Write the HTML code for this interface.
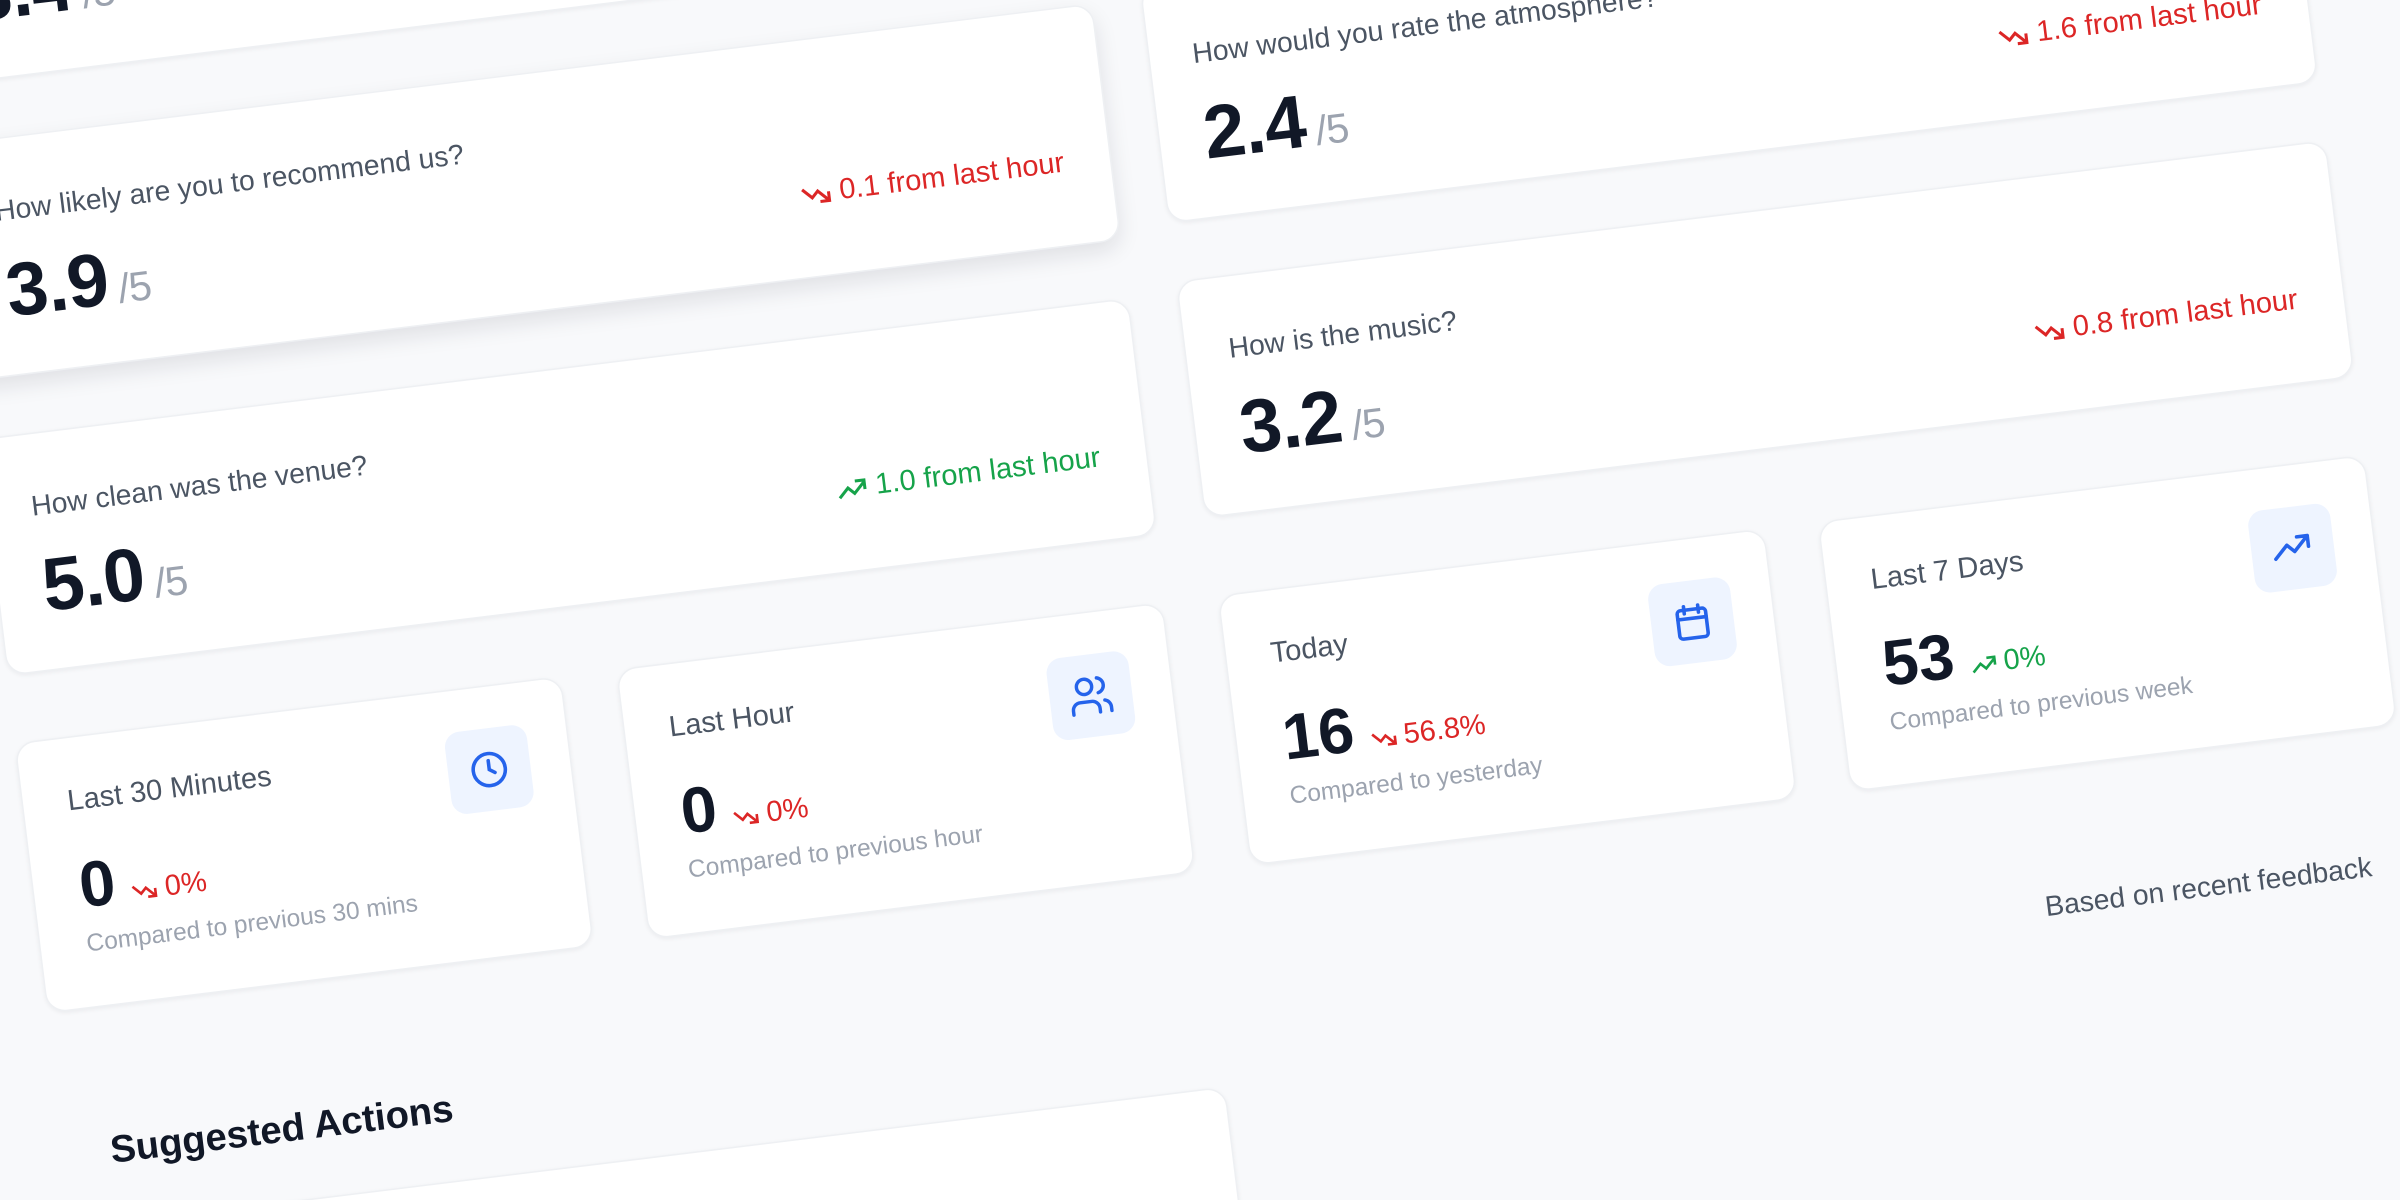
<!DOCTYPE html>
<html><head><meta charset="utf-8"><style>
html,body{margin:0;padding:0;width:2400px;height:1200px;overflow:hidden;background:#f8f9fb;font-family:"Liberation Sans",Arial,sans-serif}
#w{position:relative;width:2400px;height:1200px;overflow:hidden}
#s{position:absolute;left:0;top:0;width:1568px;height:784px;transform:scale(1.5306);transform-origin:0 0}
#r{position:absolute;left:0;top:0;width:1600px;height:900px;transform:rotate(-7deg);transform-origin:0 0}
.c{position:absolute;background:#fff;border:1px solid #eef0f3;border-radius:13px;box-shadow:0 1px 3px rgba(16,24,40,.06);box-sizing:border-box}
.q{width:757px;height:156px}
.lbl{position:absolute;left:28px;top:36px;font-size:18.5px;color:#4b5563}
.val{position:absolute;left:29px;top:72px;font-size:49px;font-weight:bold;color:#111827;letter-spacing:-0.5px}
.val span{font-size:27px;font-weight:normal;color:#9ca3af;margin-left:6px}
.tr{position:absolute;right:30px;top:90px;font-size:19px;display:flex;align-items:center;gap:5px}
.red{color:#dc2626}.grn{color:#16a34a}
.st{width:360px;height:178px;top:483px}
.sl{position:absolute;left:29px;top:31px;font-size:19px;color:#4b5563}
.ic{position:absolute;right:26px;top:27px;width:54px;height:54px;border-radius:10px;background:#eef4ff;display:flex;align-items:center;justify-content:center}
.sv{position:absolute;left:30px;top:73px;font-size:42px;font-weight:bold;color:#111827;display:flex;align-items:baseline;gap:10px}
.sv span{font-size:19px;font-weight:normal;display:inline-flex;align-items:center;gap:4px}
.sc{position:absolute;left:30px;top:127px;font-size:16px;color:#9ca3af}
</style></head><body><div id="w"><div id="s"><div id="r">
<div class="c q" style="left:-49px;top:-105px"><div class="val">3.4<span>/5</span></div></div>
<div class="c q" style="left:-49px;top:89px;box-shadow:0 6px 14px rgba(16,24,40,.10)"><div class="lbl">How likely are you to recommend us?</div><div class="val">3.9<span>/5</span></div><div class="tr red"><svg width="20" height="14" viewBox="0 0 20 14" fill="none" stroke="#dc2626" stroke-width="2"><path d="M1 3l6 6 4-4 7 7M12 12h6V6"/></svg>0.1 from last hour</div></div>
<div class="c q" style="left:-49px;top:283px"><div class="lbl">How clean was the venue?</div><div class="val">5.0<span>/5</span></div><div class="tr grn"><svg width="20" height="14" viewBox="0 0 20 14" fill="none" stroke="#16a34a" stroke-width="2"><path d="M1 12l6-6 4 4 7-7M12 2h6v6"/></svg>1.0 from last hour</div></div>
<div class="c q" style="left:740px;top:-112px"></div>
<div class="c q" style="left:740px;top:82px"><div class="lbl">How would you rate the atmosphere?</div><div class="val">2.4<span>/5</span></div><div class="tr red"><svg width="20" height="14" viewBox="0 0 20 14" fill="none" stroke="#dc2626" stroke-width="2"><path d="M1 3l6 6 4-4 7 7M12 12h6V6"/></svg>1.6 from last hour</div></div>
<div class="c q" style="left:740px;top:276px"><div class="lbl">How is the music?</div><div class="val">3.2<span>/5</span></div><div class="tr red"><svg width="20" height="14" viewBox="0 0 20 14" fill="none" stroke="#dc2626" stroke-width="2"><path d="M1 3l6 6 4-4 7 7M12 12h6V6"/></svg>0.8 from last hour</div></div>

<div class="c st" style="left:-50px"><div class="sl">Last 30 Minutes</div><div class="ic"><svg width="28" height="28" viewBox="0 0 24 24" fill="none" stroke="#2563eb" stroke-width="2" stroke-linecap="round"><circle cx="12" cy="12" r="9"/><path d="M12 7v5l3 2"/></svg></div><div class="sv">0<span class="red"><svg width="18" height="12" viewBox="0 0 20 14" fill="none" stroke="#dc2626" stroke-width="2"><path d="M1 3l6 6 4-4 7 7M12 12h6V6"/></svg>0%</span></div><div class="sc">Compared to previous 30 mins</div></div>
<div class="c st" style="left:346px"><div class="sl">Last Hour</div><div class="ic"><svg width="30" height="30" viewBox="0 0 24 24" fill="none" stroke="#2563eb" stroke-width="1.8" stroke-linecap="round"><circle cx="9" cy="7" r="4"/><path d="M2 21v-2a4 4 0 0 1 4-4h6a4 4 0 0 1 4 4v2M16 3.1a4 4 0 0 1 0 7.8M22 21v-2a4 4 0 0 0-3-3.9"/></svg></div><div class="sv">0<span class="red"><svg width="18" height="12" viewBox="0 0 20 14" fill="none" stroke="#dc2626" stroke-width="2"><path d="M1 3l6 6 4-4 7 7M12 12h6V6"/></svg>0%</span></div><div class="sc">Compared to previous hour</div></div>
<div class="c st" style="left:742px"><div class="sl">Today</div><div class="ic"><svg width="28" height="28" viewBox="0 0 24 24" fill="none" stroke="#2563eb" stroke-width="2" stroke-linecap="round"><rect x="4" y="5" width="16" height="16" rx="2"/><path d="M16 3v4M8 3v4M4 10h16"/></svg></div><div class="sv">16<span class="red"><svg width="18" height="12" viewBox="0 0 20 14" fill="none" stroke="#dc2626" stroke-width="2"><path d="M1 3l6 6 4-4 7 7M12 12h6V6"/></svg>56.8%</span></div><div class="sc">Compared to yesterday</div></div>
<div class="c st" style="left:1137px"><div class="sl">Last 7 Days</div><div class="ic"><svg width="28" height="28" viewBox="0 0 24 24" fill="none" stroke="#2563eb" stroke-width="2" stroke-linecap="round" stroke-linejoin="round"><path d="M2 17l7-7 4 4 8-8M15 6h6v6"/></svg></div><div class="sv">53<span class="grn"><svg width="18" height="12" viewBox="0 0 20 14" fill="none" stroke="#16a34a" stroke-width="2"><path d="M1 12l6-6 4 4 7-7M12 2h6v6"/></svg>0%</span></div><div class="sc">Compared to previous week</div></div>

<div style="position:absolute;right:131px;top:740px;font-size:18.5px;color:#4b5563">Based on recent feedback</div>
<div style="position:absolute;left:-20px;top:741px;font-size:25px;font-weight:bold;color:#111827">Suggested Actions</div>
<div class="c" style="left:-49px;top:802px;width:757px;height:80px;border-radius:13px 13px 0 0"></div>
</div></div></div></body></html>
